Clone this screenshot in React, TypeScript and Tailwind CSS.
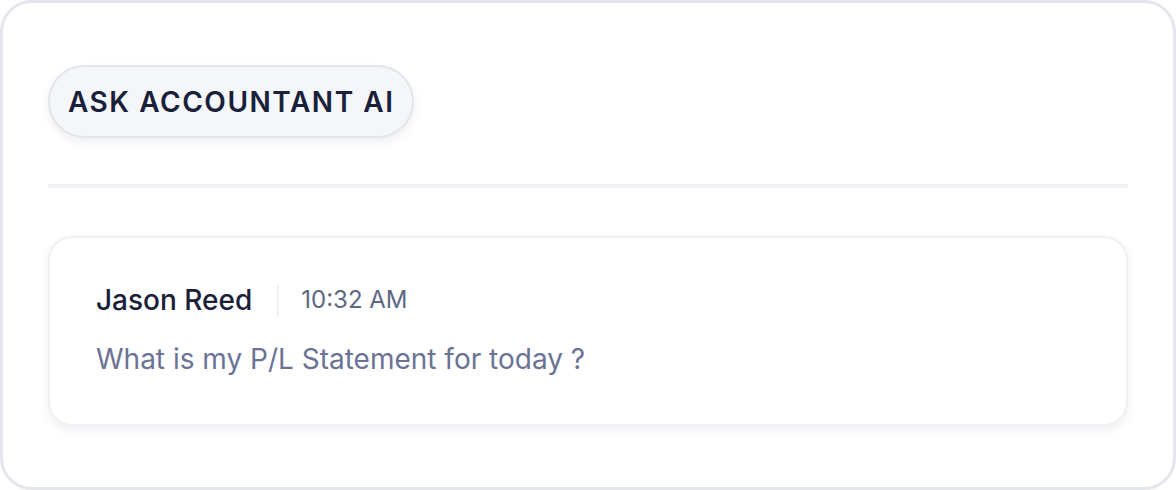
export default function App() {
  return (
    <div className="h-[490px] w-[1176px] bg-white" style={{ fontFamily: "Inter, 'Noto Sans', sans-serif" }}>
      <div className="flex h-full flex-col rounded-[32px] border-[3px] border-[#e4e6ec] bg-white px-[45px] pt-[62px]">
        <div className="flex">
          <div className="flex h-[73px] items-center rounded-full border-2 border-[#e3e5ea] bg-[#f5f6f9] px-[18px] shadow-[0_4px_8px_rgba(30,40,70,0.08)]">
            <span className="text-[28px] font-semibold tracking-[0.055em] text-[#19203a]">ASK ACCOUNTANT AI</span>
          </div>
        </div>
        <div className="mt-[46px] h-[4px] bg-[#f0f1f4]" />
        <div className="mt-[48px] rounded-[24px] border-2 border-[#eff0f4] bg-white px-[46px] pb-[48px] pt-[45px] shadow-[0_4px_10px_rgba(30,40,70,0.07)]">
          <div className="flex items-center">
            <span className="text-[28px] font-medium leading-[34px] text-[#1a2038]">Jason Reed</span>
            <div className="ml-[25px] mr-[22px] h-[33px] w-[2px] bg-[#eef0f4]" />
            <span className="text-[24px] leading-[34px] text-[#5d6784]">10:32 AM</span>
          </div>
          <p className="mt-[25px] text-[28px] leading-[34px] text-[#6b7394]">What is my P/L Statement for today ?</p>
        </div>
      </div>
    </div>
  );
}
